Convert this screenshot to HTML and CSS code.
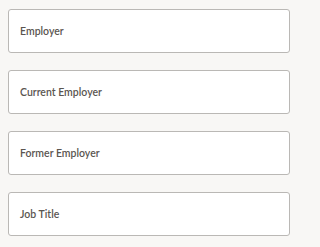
FILE: index.html
```html
<!DOCTYPE html>
<html>
<head>
<meta charset="utf-8">
<link rel="stylesheet" href="styles.css">
</head>
<body>
<div class="list">
  <div class="field"><span class="label">Employer</span></div>
  <div class="field"><span class="label">Current Employer</span></div>
  <div class="field"><span class="label">Former Employer</span></div>
  <div class="field"><span class="label">Job Title</span></div>
</div>
</body>
</html>
```
FILE: styles.css
```css
html, body {
  margin: 0;
  padding: 0;
  background: #f8f7f5;
}
body {
  width: 300px;
  height: 247px;
  overflow: hidden;
}
.list {
  display: flex;
  flex-direction: column;
  gap: 17px;
  padding: 9px 10px 0 8px;
}
.field {
  height: 44px;
  box-sizing: border-box;
  background: #ffffff;
  border: 1px solid #bab8b5;
  border-radius: 3px;
  display: flex;
  align-items: center;
  padding-left: 11px;
}
.label {
  font-family: Lato, sans-serif;
  font-weight: 600;
  font-size: 10.5px;
  color: #5a5550;
}
```
